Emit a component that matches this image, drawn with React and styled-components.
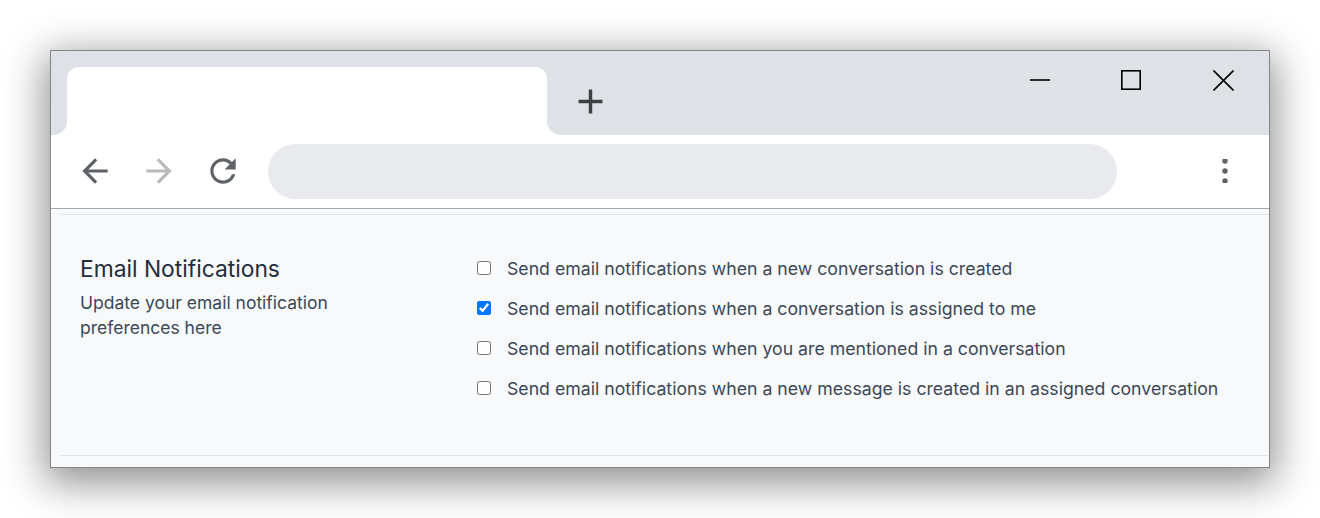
import React from "react";
import styled, { createGlobalStyle } from "styled-components";

const GlobalStyle = createGlobalStyle`
  html, body {
    margin: 0;
    padding: 0;
    background: #ffffff;
  }
  body {
    font-family: Inter, "Noto Sans", "Liberation Sans", sans-serif;
  }
  * { box-sizing: border-box; }
`;

const Stage = styled.div`
  width: 1320px;
  height: 518px;
  padding: 50px 0 0 50px;
  overflow: hidden;
`;

const Window = styled.div`
  width: 1220px;
  height: 418px;
  border: 1px solid #858585;
  box-shadow: 0 10px 38px 5px rgba(0, 0, 0, 0.44);
  display: flex;
  flex-direction: column;
  overflow: hidden;
  background: #ffffff;
`;

const TabStrip = styled.div`
  height: 84px;
  display: flex;
  background: #ffffff;
  flex-shrink: 0;
`;

const StripEdge = styled.div`
  width: 16px;
  background: #dee1e6;
  border-bottom-right-radius: 14px;
`;

const TabSlot = styled.div`
  width: 480px;
  background: #dee1e6;
  padding-top: 16px;
  display: flex;
`;

const Tab = styled.div`
  flex: 1;
  background: #ffffff;
  border-radius: 12px 12px 0 0;
`;

const StripRest = styled.div`
  flex: 1;
  background: #dee1e6;
  border-bottom-left-radius: 14px;
  display: flex;
  align-items: flex-start;
`;

const NewTabButton = styled.div`
  width: 41px;
  height: 41px;
  margin: 30px 0 0 23px;
  display: flex;
  color: #3c4043;
`;

const Spacer = styled.div`
  flex: 1;
`;

const WindowControls = styled.div`
  display: flex;
`;

const ControlButton = styled.div`
  width: 91px;
  height: 58px;
  display: flex;
  align-items: center;
  justify-content: center;
  padding-right: ${(p) => (p.$shift ? "4px" : "0")};
  color: #000000;
`;

const Toolbar = styled.div`
  height: 74px;
  flex-shrink: 0;
  display: flex;
  align-items: center;
  padding: 0 32px 1px 25px;
  border-bottom: 1px solid #a7a7a7;
  background: #ffffff;
`;

const NavButton = styled.div`
  width: 38px;
  height: 38px;
  display: flex;
  margin-right: 26px;
  color: ${(p) => (p.$disabled ? "#b9babc" : "#5f6368")};
`;

const AddressBar = styled.div`
  flex: 1;
  height: 55px;
  border-radius: 28px;
  background: #e8eaed;
  margin-right: 96px;
`;

const MenuButton = styled.div`
  width: 24px;
  height: 24px;
  display: flex;
  color: #5f6368;
`;

const Content = styled.div`
  flex: 1;
  background: #f8f9fb;
  padding: 5px 0 11px 9px;
  display: flex;
`;

const Section = styled.div`
  flex: 1;
  border-top: 1px solid #dde6ef;
  border-bottom: 1px solid #e3e5e8;
  display: flex;
  padding: 41px 0 0 20px;
`;

const InfoColumn = styled.div`
  width: 300px;
  margin-right: 97px;
`;

const Title = styled.h2`
  margin: 0 0 8px;
  font-size: 22.8px;
  line-height: 26px;
  font-weight: 400;
  color: #1f2d3d;
`;

const Description = styled.p`
  margin: 0;
  font-size: 17.5px;
  line-height: 25px;
  color: #3c4858;
`;

const OptionList = styled.div`
  display: flex;
  flex-direction: column;
  gap: 16px;
`;

const Option = styled.label`
  display: flex;
  align-items: center;
  height: 24px;
  font-size: 17.7px;
  color: #3c4858;
  cursor: pointer;
  white-space: nowrap;
`;

const Checkbox = styled.input.attrs({ type: "checkbox" })`
  width: 14px;
  height: 14px;
  margin: 0 16px 0 0;
`;

const Icon = ({ d, size = "100%" }) => (
  <svg width={size} height={size} viewBox="0 0 24 24" fill="currentColor">
    <path d={d} />
  </svg>
);

const ICONS = {
  back: "M20 11H7.83l5.59-5.59L12 4l-8 8 8 8 1.41-1.41L7.83 13H20v-2z",
  forward: "M12 4l-1.41 1.41L16.17 11H4v2h12.17l-5.58 5.59L12 20l8-8z",
  reload:
    "M17.65 6.35C16.2 4.9 14.21 4 12 4c-4.42 0-7.99 3.58-7.99 8s3.57 8 7.99 8c3.73 0 6.84-2.55 7.73-6h-2.08c-.82 2.33-3.04 4-5.65 4-3.31 0-6-2.69-6-6s2.69-6 6-6c1.66 0 3.14.69 4.22 1.78L13 11h7V4l-2.35 2.35z",
  add: "M19 13h-6v6h-2v-6H5v-2h6V5h2v6h6v2z",
};

const options = [
  { label: "Send email notifications when a new conversation is created", checked: false },
  { label: "Send email notifications when a conversation is assigned to me", checked: true },
  { label: "Send email notifications when you are mentioned in a conversation", checked: false },
  { label: "Send email notifications when a new message is created in an assigned conversation", checked: false },
];

export default function App() {
  return (
    <>
      <GlobalStyle />
      <Stage>
        <Window>
          <TabStrip>
            <StripEdge />
            <TabSlot>
              <Tab />
            </TabSlot>
            <StripRest>
              <NewTabButton>
                <Icon d={ICONS.add} />
              </NewTabButton>
              <Spacer />
              <WindowControls>
                <ControlButton $shift>
                  <svg width="20" height="20" viewBox="0 0 20 20">
                    <line x1="0" y1="10" x2="20" y2="10" stroke="currentColor" strokeWidth="1.6" />
                  </svg>
                </ControlButton>
                <ControlButton $shift>
                  <svg width="20" height="20" viewBox="0 0 20 20">
                    <rect x="0.8" y="0.8" width="18.4" height="18.4" fill="none" stroke="currentColor" strokeWidth="1.6" />
                  </svg>
                </ControlButton>
                <ControlButton>
                  <svg width="21" height="21" viewBox="0 0 21 21">
                    <path d="M0.5 0.5L20.5 20.5M20.5 0.5L0.5 20.5" stroke="currentColor" strokeWidth="1.6" />
                  </svg>
                </ControlButton>
              </WindowControls>
            </StripRest>
          </TabStrip>
          <Toolbar>
            <NavButton>
              <Icon d={ICONS.back} />
            </NavButton>
            <NavButton $disabled>
              <Icon d={ICONS.forward} />
            </NavButton>
            <NavButton>
              <Icon d={ICONS.reload} />
            </NavButton>
            <AddressBar />
            <MenuButton>
              <svg width="24" height="24" viewBox="0 0 24 24" fill="currentColor">
                <circle cx="12" cy="2" r="2.7" />
                <circle cx="12" cy="12" r="2.7" />
                <circle cx="12" cy="22" r="2.7" />
              </svg>
            </MenuButton>
          </Toolbar>
          <Content>
            <Section>
              <InfoColumn>
                <Title>Email Notifications</Title>
                <Description>Update your email notification preferences here</Description>
              </InfoColumn>
              <OptionList>
                {options.map((o) => (
                  <Option key={o.label}>
                    <Checkbox defaultChecked={o.checked} />
                    {o.label}
                  </Option>
                ))}
              </OptionList>
            </Section>
          </Content>
        </Window>
      </Stage>
    </>
  );
}
